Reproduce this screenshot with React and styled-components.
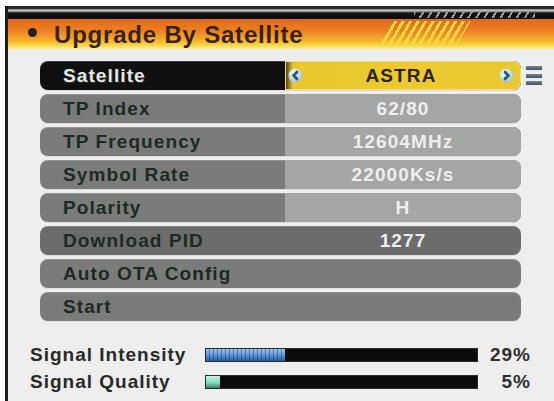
import React from 'react';
import styled, { createGlobalStyle, css } from 'styled-components';

const GlobalStyle = createGlobalStyle`
  html, body { margin: 0; padding: 0; background: #ffffff; }
  body { font-family: "Liberation Sans", Arial, sans-serif; }
`;

const Screen = styled.div`
  width: 554px;
  height: 401px;
  box-sizing: border-box;
  padding: 6px 0 0 5px;
  background: #ffffff;
  display: flex;
`;

const Panel = styled.div`
  flex: 1;
  display: flex;
  flex-direction: column;
  border-left: 3px solid #1c1c1c;
  background: #eeeeee;
  overflow: hidden;
`;

const TopBand = styled.div`
  height: 13px;
  display: flex;
  align-items: flex-end;
  justify-content: flex-end;
  padding-right: 19px;
  background: linear-gradient(
    to bottom,
    #2a2a2a 0,
    #2a2a2a 3px,
    #8a8a8a 3px,
    #c8c8c8 5px,
    #5a5a5a 6px,
    #121212 7px,
    #0c0c0c 100%
  );
`;

const DarkHatch = styled.div`
  width: 121px;
  height: 6px;
  margin-bottom: 1px;
  background: repeating-linear-gradient(
    120deg,
    #9a9a9a 0,
    #9a9a9a 2px,
    transparent 2px,
    transparent 7px
  );
`;

const TitleBand = styled.div`
  height: 31px;
  display: flex;
  align-items: center;
  padding-left: 20px;
  background: linear-gradient(
    to bottom,
    #e06a1c 0%,
    #ea7e22 35%,
    #f2a02a 60%,
    #f6cc30 80%,
    #f8e680 92%,
    #f2efd8 100%
  );
`;

const Bullet = styled.span`
  width: 9px;
  height: 9px;
  border-radius: 50%;
  background: #2a1a10;
  margin-right: 17px;
  margin-top: -4px;
`;

const Title = styled.h1`
  margin: 0;
  font-size: 24px;
  font-weight: bold;
  letter-spacing: 0.8px;
  color: #3a2212;
  line-height: 1;
`;

const YellowHatch = styled.div`
  width: 92px;
  height: 24px;
  margin-left: auto;
  margin-right: 83px;
  margin-top: -4px;
  clip-path: polygon(14px 0, 100% 0, calc(100% - 14px) 100%, 0 100%);
  background: repeating-linear-gradient(
    120deg,
    #fbd83e 0,
    #fbd83e 3px,
    transparent 3px,
    transparent 6.5px
  );
`;

const MenuArea = styled.div`
  display: flex;
  align-items: flex-start;
  margin: 11px 0 0 32px;
`;

const Rows = styled.div`
  width: 481px;
  display: flex;
  flex-direction: column;
  gap: 4px;
`;

const Row = styled.div`
  height: 29px;
  display: grid;
  grid-template-columns: 245px 1fr;
  border-radius: 8px;
  overflow: hidden;
  box-shadow: inset 0 1px 0 rgba(255, 255, 255, 0.18), 0 1px 0 rgba(0, 0, 0, 0.08);
  font-size: 19px;
  font-weight: bold;
  letter-spacing: 1.1px;
  ${({ $kind }) =>
    $kind === 'selected'
      ? css`background: #101010;`
      : $kind === 'dark'
      ? css`background: #6c6c6c;`
      : css`background: #7b7b7b;`}
`;

const LabelCell = styled.div`
  display: flex;
  align-items: center;
  padding-left: 23px;
  color: ${({ $kind }) => ($kind === 'selected' ? '#e6e8e8' : '#1c2a22')};
  text-shadow: ${({ $kind }) =>
    $kind === 'selected' ? '0 0 1px #000, 1px 1px 0 #3a3a3a' : 'none'};
  white-space: nowrap;
`;

const ValueCell = styled.div`
  display: flex;
  align-items: center;
  justify-content: center;
  color: #eeeeee;
  white-space: nowrap;
  ${({ $kind }) =>
    $kind === 'selected'
      ? css`
          justify-content: space-between;
          padding: 0 7px 0 3px;
          color: #2a2410;
          border-radius: 0 8px 8px 0;
          background: linear-gradient(to right, #3a3420 0, #e8c82c 8px, #ecca30 60%, #e9c72e 100%);
          box-shadow: inset 0 0 0 1px #f4dc70;
        `
      : $kind === 'split'
      ? css`background: #a5a5a5;`
      : css`background: transparent;`}
`;

const ValueText = styled.span`
  flex: 1;
  text-align: center;
`;

const ArrowBtn = styled.svg`
  width: 15px;
  height: 15px;
  flex: none;
`;

const ScrollIcon = styled.div`
  margin: 5px 0 0 5px;
  width: 16px;
  display: flex;
  flex-direction: column;
  gap: 3.5px;
`;

const ScrollBar = styled.span`
  height: 4px;
  background: linear-gradient(to bottom, #7a8694 0, #434e5a 100%);
`;

const SignalArea = styled.div`
  margin: 23px 0 0 22px;
  display: flex;
  flex-direction: column;
  gap: 10px;
`;

const SignalRow = styled.div`
  display: grid;
  grid-template-columns: 175px 273px 53px;
  align-items: center;
  height: 17px;
  font-size: 19px;
  font-weight: bold;
  letter-spacing: 1px;
`;

const SignalLabel = styled.span`
  color: #262a28;
  white-space: nowrap;
`;

const Track = styled.div`
  height: 14px;
  background: #0c0c0c;
  border: 1px solid #2a2a2a;
  box-sizing: border-box;
  display: flex;
`;

const Fill = styled.div`
  height: 100%;
  ${({ $tone }) =>
    $tone === 'blue'
      ? css`
          background: repeating-linear-gradient(
              90deg,
              rgba(255, 255, 255, 0) 0,
              rgba(255, 255, 255, 0) 3px,
              rgba(20, 50, 110, 0.45) 3px,
              rgba(20, 50, 110, 0.45) 4px
            ),
            linear-gradient(to bottom, #9cc8f0 0, #5e98dc 50%, #2c5c9c 100%);
        `
      : css`
          background: linear-gradient(to bottom, #c6f4e4 0, #86dcc0 55%, #3c7c68 100%);
        `}
`;

const Percent = styled.span`
  text-align: right;
  color: #303030;
`;

const rows = [
  { label: 'Satellite', value: 'ASTRA', kind: 'selected' },
  { label: 'TP Index', value: '62/80', kind: 'split' },
  { label: 'TP Frequency', value: '12604MHz', kind: 'split' },
  { label: 'Symbol Rate', value: '22000Ks/s', kind: 'split' },
  { label: 'Polarity', value: 'H', kind: 'split' },
  { label: 'Download PID', value: '1277', kind: 'dark' },
  { label: 'Auto OTA Config', value: '', kind: 'plain' },
  { label: 'Start', value: '', kind: 'plain' },
];

const signals = [
  { label: 'Signal Intensity', pct: 29, tone: 'blue' },
  { label: 'Signal Quality', pct: 5, tone: 'mint' },
];

function Arrow({ dir, id }) {
  const d = dir === 'left' ? 'M8.8 4.2 L5.6 7.5 L8.8 10.8' : 'M6.2 4.2 L9.4 7.5 L6.2 10.8';
  return (
    <ArrowBtn viewBox="0 0 15 15">
      <defs>
        <radialGradient id={id} cx="40%" cy="35%" r="70%">
          <stop offset="0" stopColor="#ffffff" />
          <stop offset="1" stopColor="#a4bcc2" />
        </radialGradient>
      </defs>
      <circle cx="7.5" cy="7.5" r="7" fill={`url(#${id})`} />
      <path d={d} fill="none" stroke="#1a5f7e" strokeWidth="3" strokeLinecap="round" strokeLinejoin="round" />
    </ArrowBtn>
  );
}

export default function App() {
  return (
    <>
      <GlobalStyle />
      <Screen>
        <Panel>
          <TopBand>
            <DarkHatch />
          </TopBand>
          <TitleBand>
            <Bullet />
            <Title>Upgrade By Satellite</Title>
            <YellowHatch />
          </TitleBand>
          <MenuArea>
            <Rows>
              {rows.map((r) => (
                <Row key={r.label} $kind={r.kind}>
                  <LabelCell $kind={r.kind}>{r.label}</LabelCell>
                  <ValueCell $kind={r.kind}>
                    {r.kind === 'selected' ? (
                      <>
                        <Arrow dir="left" id="arrL" />
                        <ValueText>{r.value}</ValueText>
                        <Arrow dir="right" id="arrR" />
                      </>
                    ) : (
                      r.value
                    )}
                  </ValueCell>
                </Row>
              ))}
            </Rows>
            <ScrollIcon>
              <ScrollBar />
              <ScrollBar />
              <ScrollBar />
            </ScrollIcon>
          </MenuArea>
          <SignalArea>
            {signals.map((s) => (
              <SignalRow key={s.label}>
                <SignalLabel>{s.label}</SignalLabel>
                <Track>
                  <Fill $tone={s.tone} style={{ width: `${s.pct}%` }} />
                </Track>
                <Percent>{s.pct}%</Percent>
              </SignalRow>
            ))}
          </SignalArea>
        </Panel>
      </Screen>
    </>
  );
}
